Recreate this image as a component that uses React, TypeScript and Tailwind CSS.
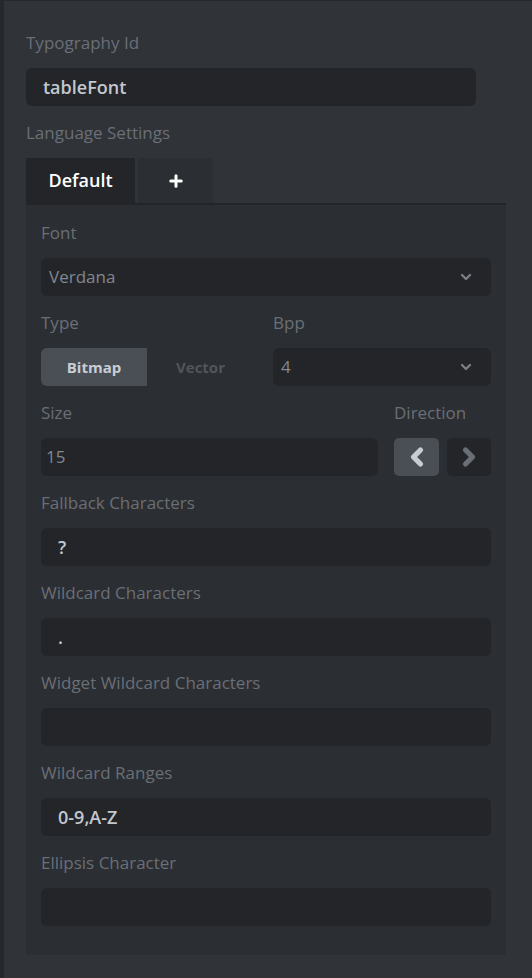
import { ChevronDown, ChevronLeft, ChevronRight, Plus } from "lucide-react"

const font = { fontFamily: "'Open Sans', 'Noto Sans', sans-serif" }

function Label({ children }: { children: React.ReactNode }) {
  return <div className="h-[20px] text-[17px] leading-[20px] text-[#6a6f77]">{children}</div>
}

function TextField({ value }: { value: string }) {
  return (
    <div className="mt-[15px] flex h-[38px] items-center rounded-[6px] bg-[#232529] px-[17px] text-[18px] font-semibold text-[#c3c8d0]">
      {value}
    </div>
  )
}

function Select({ value, className = "" }: { value: string; className?: string }) {
  return (
    <div
      className={`flex h-[38px] items-center justify-between rounded-[6px] bg-[#232529] pl-[8px] pr-[17px] text-[17px] text-[#82878f] ${className}`}
    >
      <span>{value}</span>
      <ChevronDown size={16} strokeWidth={3.5} className="text-[#7a7f87]" />
    </div>
  )
}

export default function App() {
  return (
    <div className="min-h-[978px] w-[532px] border-l-[4px] border-t border-[#26282b] bg-[#303337]" style={font}>
      <div className="pl-[22px] pr-[26px] pt-[32px]">
        <Label>Typography Id</Label>
        <div className="mt-[15px] flex h-[38px] w-[450px] items-center rounded-[6px] bg-[#232529] px-[17px] text-[18px] font-semibold text-[#c3c8d0]">
          tableFont
        </div>

        <div className="mt-[17px]">
          <Label>Language Settings</Label>
        </div>

        {/* tabs */}
        <div className="mt-[15px] flex gap-[3px] border-b-[2px] border-[#232529]">
          <div className="flex h-[45px] w-[109px] items-center justify-center bg-[#232529] text-[18px] font-semibold text-white">
            Default
          </div>
          <div className="flex h-[45px] w-[75px] items-center justify-center bg-[#2b2e32]">
            <Plus size={18} strokeWidth={4} className="text-white" />
          </div>
        </div>

        {/* panel */}
        <div className="bg-[#2b2e32] px-[15px] pb-[29px] pt-[18px]">
          <Label>Font</Label>
          <Select value="Verdana" className="mt-[15px]" />

          <div className="mt-[17px] flex gap-[19px]">
            <div className="w-[213px]">
              <Label>Type</Label>
              <div className="mt-[15px] flex h-[38px] text-[15px] font-bold">
                <div className="flex w-[106px] items-center justify-center rounded-l-[6px] bg-[#4a4e55] text-[#c8cdd5]">
                  Bitmap
                </div>
                <div className="flex w-[107px] items-center justify-center text-[#51555c]">Vector</div>
              </div>
            </div>
            <div className="flex-1">
              <Label>Bpp</Label>
              <Select value="4" className="mt-[15px]" />
            </div>
          </div>

          <div className="mt-[17px] flex gap-[16px]">
            <div className="flex-1">
              <Label>Size</Label>
              <div className="mt-[15px] flex h-[38px] items-center rounded-[6px] bg-[#232529] px-[5px] text-[17px] text-[#82878f]">
                15
              </div>
            </div>
            <div className="w-[97px]">
              <Label>Direction</Label>
              <div className="mt-[15px] flex gap-[8px]">
                <div className="flex h-[38px] w-[45px] items-center justify-center rounded-[5px] bg-[#4a4e55]">
                  <ChevronLeft size={28} strokeWidth={4.5} className="text-[#c8cdd5]" />
                </div>
                <div className="flex h-[38px] w-[44px] items-center justify-center rounded-[5px] bg-[#232529]">
                  <ChevronRight size={28} strokeWidth={4.5} className="text-[#6a6f77]" />
                </div>
              </div>
            </div>
          </div>

          <div className="mt-[17px]">
            <Label>Fallback Characters</Label>
            <TextField value="?" />
          </div>
          <div className="mt-[17px]">
            <Label>Wildcard Characters</Label>
            <TextField value="." />
          </div>
          <div className="mt-[17px]">
            <Label>Widget Wildcard Characters</Label>
            <TextField value="" />
          </div>
          <div className="mt-[17px]">
            <Label>Wildcard Ranges</Label>
            <TextField value="0-9,A-Z" />
          </div>
          <div className="mt-[17px]">
            <Label>Ellipsis Character</Label>
            <TextField value="" />
          </div>
        </div>
      </div>
    </div>
  )
}
